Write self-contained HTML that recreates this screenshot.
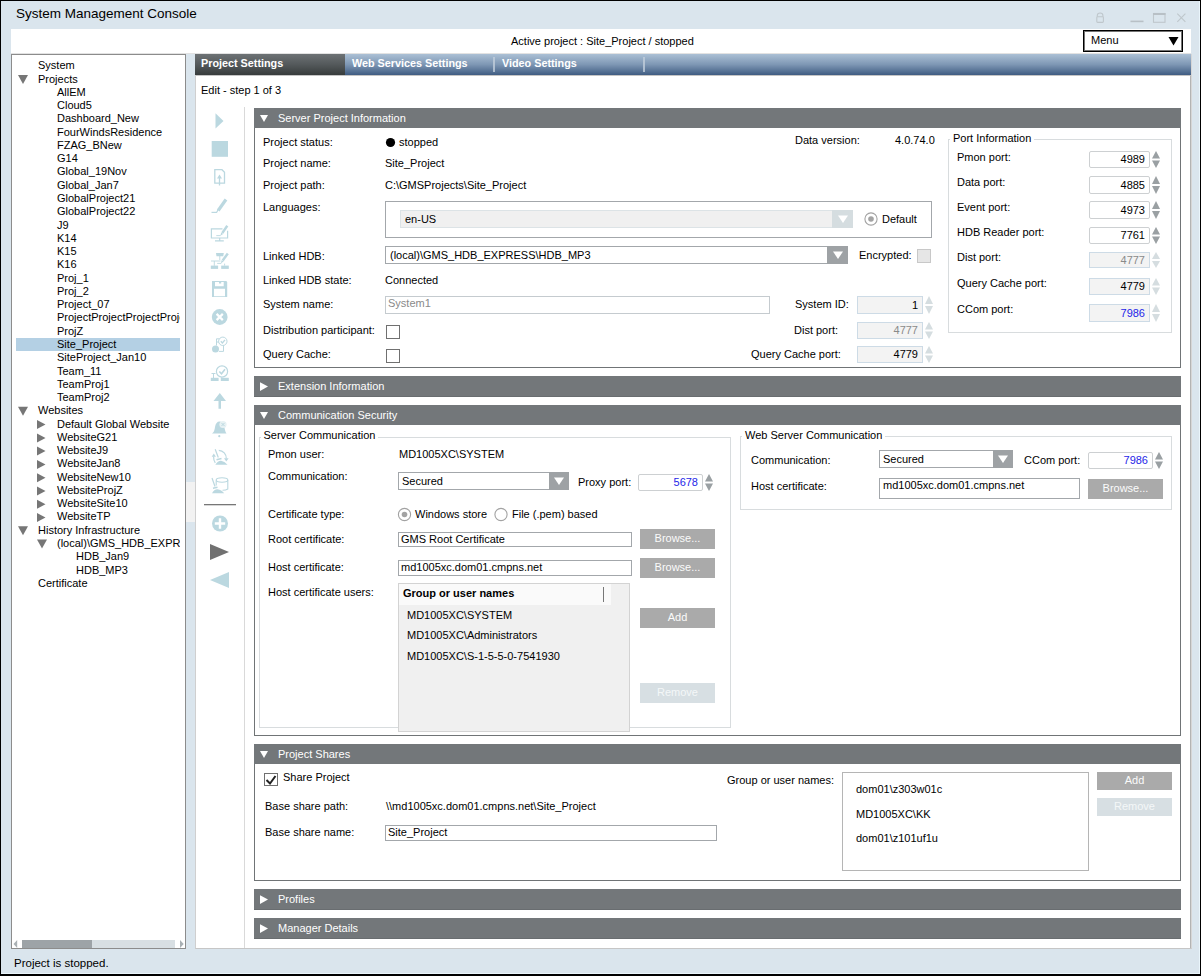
<!DOCTYPE html><html><head><meta charset="utf-8"><style>
*{margin:0;padding:0;box-sizing:border-box}
html,body{width:1201px;height:976px;overflow:hidden}
body{position:relative;background:#dae5ed;font-family:"Liberation Sans",sans-serif;font-size:11px;color:#000}
.t{position:absolute;white-space:nowrap;line-height:13px}
.b{position:absolute}
.g{color:#8a8a8a}
.w{color:#fff}
.bl{color:#1e1ee8}
.bold{font-weight:bold}
svg{position:absolute;overflow:visible}
</style></head><body>
<div class="b" style="left:0px;top:0px;width:1201px;height:976px;border-left:1px solid #000;border-top:1px solid #000;border-right:1px solid #000;border-bottom:2px solid #000"></div>
<div class="b" style="left:1199px;top:1px;width:1px;height:973px;background:#eaf5fb"></div>
<div class="b" style="left:1px;top:973px;width:1199px;height:1px;background:#eaf5fb"></div>
<div class="t" style="left:16px;top:6px;font-size:13.5px;line-height:16px">System Management Console</div>
<svg style="left:0;top:0" width="1201" height="976">
<g fill="none" stroke="#bfc7cc" stroke-width="1.1">
<rect x="1096.8" y="16.8" width="6.6" height="5.6" rx="0.8"/>
<path d="M1097.3 16.8 v-1.3 a2.8 2.5 0 0 1 5.6 0 v1.3"/>
<rect x="1153.5" y="13.5" width="11.5" height="8.8"/>
<path d="M1177.3 13.6 L1185.4 21.9 M1185.4 13.6 L1177.3 21.9"/>
</g>
<rect x="1130.5" y="20.6" width="13" height="1.6" fill="#b8c0c6"/>
<rect x="1153" y="13" width="12.5" height="2" fill="#b8c0c6"/>
</svg>
<div class="b" style="left:11px;top:29px;width:1180px;height:25px;background:#fff;border-bottom:1px solid #e2e2e2"></div>
<div class="t " style="left:511px;top:35.0px;">Active project : Site_Project / stopped</div>
<div class="b" style="left:1083px;top:30px;width:100px;height:22px;border:1px solid #000;box-shadow:inset 0 0 0 1px rgba(0,0,0,.55);background:#fff"></div>
<div class="t " style="left:1091px;top:34.0px;">Menu</div>
<svg style="left:0;top:0" width="1201" height="976"><path d="M1168.5 37 L1178.5 37 L1173.5 45.5Z" fill="#000"/></svg>
<div class="b" style="left:11px;top:54px;width:175px;height:895px;background:#fff;border:1px solid #8c8c8c"></div>
<div class="b" style="left:12px;top:55px;width:168px;height:880px;overflow:hidden">
<div class="t" style="left:26px;top:4.30px">System</div>
<div class="t" style="left:26px;top:17.57px">Projects</div>
<div class="t" style="left:45px;top:30.84px">AllEM</div>
<div class="t" style="left:45px;top:44.11px">Cloud5</div>
<div class="t" style="left:45px;top:57.38px">Dashboard_New</div>
<div class="t" style="left:45px;top:70.65px">FourWindsResidence</div>
<div class="t" style="left:45px;top:83.92px">FZAG_BNew</div>
<div class="t" style="left:45px;top:97.19px">G14</div>
<div class="t" style="left:45px;top:110.46px">Global_19Nov</div>
<div class="t" style="left:45px;top:123.73px">Global_Jan7</div>
<div class="t" style="left:45px;top:137.00px">GlobalProject21</div>
<div class="t" style="left:45px;top:150.27px">GlobalProject22</div>
<div class="t" style="left:45px;top:163.54px">J9</div>
<div class="t" style="left:45px;top:176.81px">K14</div>
<div class="t" style="left:45px;top:190.08px">K15</div>
<div class="t" style="left:45px;top:203.35px">K16</div>
<div class="t" style="left:45px;top:216.62px">Proj_1</div>
<div class="t" style="left:45px;top:229.89px">Proj_2</div>
<div class="t" style="left:45px;top:243.16px">Project_07</div>
<div class="t" style="left:45px;top:256.43px">ProjectProjectProjectProject</div>
<div class="t" style="left:45px;top:269.70px">ProjZ</div>
<div class="b" style="left:4px;top:282.97px;width:165px;height:13px;background:#b4d0e4"></div>
<div class="t" style="left:45px;top:282.97px">Site_Project</div>
<div class="t" style="left:45px;top:296.24px">SiteProject_Jan10</div>
<div class="t" style="left:45px;top:309.51px">Team_11</div>
<div class="t" style="left:45px;top:322.78px">TeamProj1</div>
<div class="t" style="left:45px;top:336.05px">TeamProj2</div>
<div class="t" style="left:26px;top:349.32px">Websites</div>
<div class="t" style="left:45px;top:362.59px">Default Global Website</div>
<div class="t" style="left:45px;top:375.86px">WebsiteG21</div>
<div class="t" style="left:45px;top:389.13px">WebsiteJ9</div>
<div class="t" style="left:45px;top:402.40px">WebsiteJan8</div>
<div class="t" style="left:45px;top:415.67px">WebsiteNew10</div>
<div class="t" style="left:45px;top:428.94px">WebsiteProjZ</div>
<div class="t" style="left:45px;top:442.21px">WebsiteSite10</div>
<div class="t" style="left:45px;top:455.48px">WebsiteTP</div>
<div class="t" style="left:26px;top:468.75px">History Infrastructure</div>
<div class="t" style="left:45px;top:482.02px">(local)\GMS_HDB_EXPRESS</div>
<div class="t" style="left:64px;top:495.29px">HDB_Jan9</div>
<div class="t" style="left:64px;top:508.56px">HDB_MP3</div>
<div class="t" style="left:26px;top:521.83px">Certificate</div>
</div>
<svg style="left:0;top:0" width="1201" height="976"><g fill="#767676"><path d="M18 75.1 L28 75.1 L23 84.1Z"/><path d="M18 406.8 L28 406.8 L23 415.8Z"/><path d="M37 420.1 L45.5 424.6 L37 429.1Z"/><path d="M37 433.4 L45.5 437.9 L37 442.4Z"/><path d="M37 446.6 L45.5 451.1 L37 455.6Z"/><path d="M37 459.9 L45.5 464.4 L37 468.9Z"/><path d="M37 473.2 L45.5 477.7 L37 482.2Z"/><path d="M37 486.4 L45.5 490.9 L37 495.4Z"/><path d="M37 499.7 L45.5 504.2 L37 508.7Z"/><path d="M37 513.0 L45.5 517.5 L37 522.0Z"/><path d="M18 526.2 L28 526.2 L23 535.2Z"/><path d="M37 539.5 L47 539.5 L42 548.5Z"/></g></svg>
<div class="b" style="left:22px;top:940px;width:70px;height:8px;background:#9da3a7"></div>
<div class="b" style="left:92px;top:940px;width:83px;height:8px;background:#d8dfe3"></div>
<svg style="left:0;top:0" width="1201" height="976"><g fill="#a9b0b4"><path d="M13.5 944 L17.2 940 L17.2 948Z"/><path d="M183.7 944 L180 940 L180 948Z"/></g></svg>
<div class="t " style="left:14px;top:956.5px;font-size:11.5px">Project is stopped.</div>
<div class="b" style="left:186px;top:482px;width:9px;height:40px;background:#f2f2f2"></div>
<div class="b" style="left:195px;top:54px;width:997px;height:895px;background:#fff;border-left:1px solid #cfcfcf;border-right:1px solid #d6d6d6;border-bottom:1px solid #c6c6c6"></div>
<div class="b" style="left:1190px;top:54px;width:1px;height:894px;background:#b3b3b3"></div>
<div class="b" style="left:195px;top:54px;width:996px;height:21px;background:linear-gradient(#abc0d5,#7e97b4 50%,#3f5c82)"></div>
<div class="b" style="left:195px;top:54px;width:150px;height:21px;background:linear-gradient(#6d7275,#54595b 50%,#373c3c)"></div>
<div class="b" style="left:196px;top:75px;width:995px;height:1px;background:#c4c4c4"></div>
<div class="t bold w" style="left:201px;top:57px;font-size:10.8px">Project Settings</div>
<div class="t bold w" style="left:352px;top:57px;font-size:10.8px">Web Services Settings</div>
<div class="t bold w" style="left:502px;top:57px;font-size:10.8px">Video Settings</div>
<div class="b" style="left:493px;top:57px;width:2px;height:15px;background:#c0cddb;opacity:.8"></div>
<div class="b" style="left:643px;top:57px;width:2px;height:15px;background:#c0cddb;opacity:.8"></div>
<div class="t " style="left:201px;top:83.5px;">Edit - step 1 of 3</div>
<div class="b" style="left:244px;top:107px;width:1px;height:841px;background:#d9d9d9"></div>
<div class="b" style="left:254px;top:108px;width:927px;height:20px;background:#73777a"></div>
<svg style="left:0;top:0" width="1201" height="976"><path d="M260 115 L268 115 L264 122Z" fill="#fff"/></svg>
<div class="t w" style="left:278px;top:111.5px;">Server Project Information</div>
<div class="b" style="left:254px;top:128px;width:927px;height:240px;border:1px solid #707476;border-top:none"></div>
<div class="t " style="left:263px;top:135.5px;">Project status:</div>
<svg style="left:0;top:0" width="1201" height="976"><circle cx="390.5" cy="142.5" r="4.6" fill="#000"/></svg>
<div class="t " style="left:399px;top:135.5px;">stopped</div>
<div class="t " style="left:263px;top:157.0px;">Project name:</div>
<div class="t " style="left:385px;top:157.0px;">Site_Project</div>
<div class="t " style="left:263px;top:178.5px;">Project path:</div>
<div class="t " style="left:385px;top:178.5px;">C:\GMSProjects\Site_Project</div>
<div class="t " style="left:263px;top:201.0px;">Languages:</div>
<div class="b" style="left:385px;top:201px;width:547px;height:37px;border:1px solid #a3a7ab"></div>
<div class="b" style="left:400px;top:210px;width:453px;height:18px;border:1px solid #dce3e6;background:#f0f0f0"></div>
<div class="b" style="left:832px;top:210px;width:21px;height:18px;background:#d5dde0"></div>
<svg style="left:0;top:0" width="1201" height="976"><path d="M838 215.5 L848 215.5 L843 223.0Z" fill="#fff"/></svg>
<div class="t " style="left:405px;top:212.5px;">en-US</div>
<svg style="left:0;top:0" width="1201" height="976"><circle cx="871" cy="219" r="6.1" fill="#fff" stroke="#a2a2a2" stroke-width="1.1"/><circle cx="871" cy="219" r="2.8" fill="#a3a3a3"/></svg>
<div class="t " style="left:882px;top:212.5px;">Default</div>
<div class="t " style="left:263px;top:249.5px;">Linked HDB:</div>
<div class="b" style="left:385px;top:246px;width:463px;height:18px;border:1px solid #a3a7ab;background:#fff"></div>
<div class="b" style="left:827px;top:246px;width:21px;height:18px;background:#9ea2a5"></div>
<svg style="left:0;top:0" width="1201" height="976"><path d="M833 251.5 L843 251.5 L838 259.0Z" fill="#fff"/></svg>
<div class="t " style="left:390px;top:248.5px;">(local)\GMS_HDB_EXPRESS\HDB_MP3</div>
<div class="t " style="left:859px;top:248.5px;">Encrypted:</div>
<div class="b" style="left:917px;top:249px;width:14px;height:14px;border:1.2px solid #c8c8c8;background:#e6e6e6"></div>
<div class="t " style="left:263px;top:273.5px;">Linked HDB state:</div>
<div class="t " style="left:385px;top:273.5px;">Connected</div>
<div class="t " style="left:263px;top:297.5px;">System name:</div>
<div class="b" style="left:385px;top:296px;width:385px;height:18px;border:1px solid #c5cbcf;background:#fff"></div>
<div class="t g" style="left:388px;top:297.0px;">System1</div>
<div class="t " style="left:795px;top:133.5px;">Data version:</div>
<div class="t " style="left:895px;top:133.5px;">4.0.74.0</div>
<div class="t " style="left:795px;top:297.5px;">System ID:</div>
<div class="b" style="left:857px;top:296px;width:66px;height:18px;border:1.5px solid #cddbe6;background:#f3f3f3"></div>
<div class="t " style="right:283px;top:298.5px;">1</div>
<svg style="left:0;top:0" width="1201" height="976"><g fill="#d5dde0"><path d="M925 304.0 L933 304.0 L929 296Z"/><path d="M925 306.0 L933 306.0 L929 314Z"/></g></svg>
<div class="t " style="left:794px;top:324.0px;">Dist port:</div>
<div class="b" style="left:857px;top:322px;width:66px;height:17px;border:1.5px solid #cddbe6;background:#f3f3f3"></div>
<div class="t g" style="right:283px;top:324.0px;">4777</div>
<svg style="left:0;top:0" width="1201" height="976"><g fill="#d5dde0"><path d="M925 329.5 L933 329.5 L929 322Z"/><path d="M925 331.5 L933 331.5 L929 339Z"/></g></svg>
<div class="t " style="left:751px;top:348.0px;">Query Cache port:</div>
<div class="b" style="left:857px;top:346px;width:66px;height:17px;border:1.5px solid #cddbe6;background:#f3f3f3"></div>
<div class="t " style="right:283px;top:348.0px;">4779</div>
<svg style="left:0;top:0" width="1201" height="976"><g fill="#d5dde0"><path d="M925 353.5 L933 353.5 L929 346Z"/><path d="M925 355.5 L933 355.5 L929 363Z"/></g></svg>
<div class="t " style="left:263px;top:323.5px;">Distribution participant:</div>
<div class="b" style="left:386px;top:325px;width:14px;height:14px;border:1.2px solid #707070;background:#fff"></div>
<div class="t " style="left:263px;top:347.5px;">Query Cache:</div>
<div class="b" style="left:386px;top:349px;width:14px;height:14px;border:1.2px solid #707070;background:#fff"></div>
<div class="b" style="left:948px;top:139px;width:224px;height:194px;border:1px solid #d8dcde"></div>
<div class="t" style="left:950px;top:131.5px;background:#fff;padding:0 3px 0 3px">Port Information</div>
<div class="t " style="left:957px;top:150.8px;">Pmon port:</div>
<div class="b" style="left:1089px;top:151px;width:61px;height:17px;border:1px solid #cdd0d2;border-radius:2px;background:#fff"></div>
<div class="t " style="right:56px;top:153.0px;">4989</div>
<svg style="left:0;top:0" width="1201" height="976"><g fill="#9aa0a3"><path d="M1152 158.5 L1160 158.5 L1156 151Z"/><path d="M1152 160.5 L1160 160.5 L1156 168Z"/></g></svg>
<div class="t " style="left:957px;top:176.1px;">Data port:</div>
<div class="b" style="left:1089px;top:176px;width:61px;height:18px;border:1px solid #cdd0d2;border-radius:2px;background:#fff"></div>
<div class="t " style="right:56px;top:178.5px;">4885</div>
<svg style="left:0;top:0" width="1201" height="976"><g fill="#9aa0a3"><path d="M1152 184.0 L1160 184.0 L1156 176Z"/><path d="M1152 186.0 L1160 186.0 L1156 194Z"/></g></svg>
<div class="t " style="left:957px;top:200.9px;">Event port:</div>
<div class="b" style="left:1089px;top:201px;width:61px;height:18px;border:1px solid #cdd0d2;border-radius:2px;background:#fff"></div>
<div class="t " style="right:56px;top:203.5px;">4973</div>
<svg style="left:0;top:0" width="1201" height="976"><g fill="#9aa0a3"><path d="M1152 209.0 L1160 209.0 L1156 201Z"/><path d="M1152 211.0 L1160 211.0 L1156 219Z"/></g></svg>
<div class="t " style="left:957px;top:225.8px;">HDB Reader port:</div>
<div class="b" style="left:1089px;top:227px;width:61px;height:17px;border:1px solid #cdd0d2;border-radius:2px;background:#fff"></div>
<div class="t " style="right:56px;top:229.0px;">7761</div>
<svg style="left:0;top:0" width="1201" height="976"><g fill="#9aa0a3"><path d="M1152 234.5 L1160 234.5 L1156 227Z"/><path d="M1152 236.5 L1160 236.5 L1156 244Z"/></g></svg>
<div class="t " style="left:957px;top:250.7px;">Dist port:</div>
<div class="b" style="left:1089px;top:252px;width:61px;height:16px;border:1.5px solid #cddbe6;background:#f3f3f3"></div>
<div class="t g" style="right:56px;top:253.5px;">4777</div>
<svg style="left:0;top:0" width="1201" height="976"><g fill="#d5dde0"><path d="M1152 259.0 L1160 259.0 L1156 252Z"/><path d="M1152 261.0 L1160 261.0 L1156 268Z"/></g></svg>
<div class="t " style="left:957px;top:276.5px;">Query Cache port:</div>
<div class="b" style="left:1089px;top:278px;width:61px;height:17px;border:1.5px solid #cddbe6;background:#f3f3f3"></div>
<div class="t " style="right:56px;top:280.0px;">4779</div>
<svg style="left:0;top:0" width="1201" height="976"><g fill="#d5dde0"><path d="M1152 285.5 L1160 285.5 L1156 278Z"/><path d="M1152 287.5 L1160 287.5 L1156 295Z"/></g></svg>
<div class="t " style="left:957px;top:302.7px;">CCom port:</div>
<div class="b" style="left:1089px;top:304px;width:61px;height:18px;border:1.5px solid #cddbe6;background:#f3f3f3"></div>
<div class="t bl" style="right:56px;top:306.5px;">7986</div>
<svg style="left:0;top:0" width="1201" height="976"><g fill="#d5dde0"><path d="M1152 312.0 L1160 312.0 L1156 304Z"/><path d="M1152 314.0 L1160 314.0 L1156 322Z"/></g></svg>
<div class="b" style="left:254px;top:376px;width:927px;height:20px;background:#73777a"></div>
<div class="b" style="left:254px;top:396px;width:927px;height:1px;background:#696d70"></div>
<svg style="left:0;top:0" width="1201" height="976"><path d="M260 382.3 L268 386.6 L260 391Z" fill="#fff"/></svg>
<div class="t w" style="left:278px;top:379.5px;">Extension Information</div>
<div class="b" style="left:254px;top:405px;width:927px;height:20px;background:#73777a"></div>
<svg style="left:0;top:0" width="1201" height="976"><path d="M260 412 L268 412 L264 419Z" fill="#fff"/></svg>
<div class="t w" style="left:278px;top:408.5px;">Communication Security</div>
<div class="b" style="left:254px;top:425px;width:927px;height:311px;border:1px solid #707476;border-top:none"></div>
<div class="b" style="left:259px;top:437px;width:472px;height:291px;border:1px solid #d8dcde"></div>
<div class="t" style="left:260.5px;top:428.8px;background:#fff;padding:0 3px 0 3px">Server Communication</div>
<div class="t " style="left:268px;top:448.2px;">Pmon user:</div>
<div class="t " style="left:399px;top:448.2px;">MD1005XC\SYSTEM</div>
<div class="t " style="left:268px;top:469.8px;">Communication:</div>
<div class="b" style="left:398px;top:472px;width:171px;height:18px;border:1px solid #a3a7ab;background:#fff"></div>
<div class="b" style="left:549px;top:472px;width:20px;height:18px;background:#9ea2a5"></div>
<svg style="left:0;top:0" width="1201" height="976"><path d="M554 477.5 L564 477.5 L559 485.0Z" fill="#fff"/></svg>
<div class="t " style="left:402px;top:474.5px;">Secured</div>
<div class="t " style="left:578px;top:475.9px;">Proxy port:</div>
<div class="b" style="left:638px;top:474px;width:65px;height:17px;border:1px solid #cdd0d2;border-radius:2px;background:#fff"></div>
<div class="t bl" style="right:503px;top:476.0px;">5678</div>
<svg style="left:0;top:0" width="1201" height="976"><g fill="#9aa0a3"><path d="M705 481.5 L713 481.5 L709 474Z"/><path d="M705 483.5 L713 483.5 L709 491Z"/></g></svg>
<div class="t " style="left:268px;top:508.2px;">Certificate type:</div>
<svg style="left:0;top:0" width="1201" height="976"><circle cx="404.5" cy="514.5" r="6.1" fill="#fff" stroke="#a2a2a2" stroke-width="1.1"/><circle cx="404.5" cy="514.5" r="2.8" fill="#a3a3a3"/></svg>
<div class="t " style="left:415px;top:508.2px;">Windows store</div>
<svg style="left:0;top:0" width="1201" height="976"><circle cx="501" cy="514.5" r="6.1" fill="#fff" stroke="#a2a2a2" stroke-width="1.1"/></svg>
<div class="t " style="left:512px;top:508.2px;">File (.pem) based</div>
<div class="t " style="left:268px;top:532.5px;">Root certificate:</div>
<div class="b" style="left:398px;top:532px;width:234px;height:15px;border:1px solid #a3a7ab;background:#fff"></div>
<div class="t " style="left:401px;top:532.5px;">GMS Root Certificate</div>
<div class="b" style="left:640px;top:529px;width:75px;height:20px;background:#aaaaaa;color:#fbfbfb;text-align:center;line-height:18px;font-size:11px">Browse...</div>
<div class="t " style="left:268px;top:560.5px;">Host certificate:</div>
<div class="b" style="left:398px;top:560px;width:234px;height:16px;border:1px solid #a3a7ab;background:#fff"></div>
<div class="t " style="left:401px;top:561.0px;">md1005xc.dom01.cmpns.net</div>
<div class="b" style="left:640px;top:558px;width:75px;height:20px;background:#aaaaaa;color:#fbfbfb;text-align:center;line-height:18px;font-size:11px">Browse...</div>
<div class="t " style="left:268px;top:585.7px;">Host certificate users:</div>
<div class="b" style="left:398px;top:583px;width:232px;height:149px;border:1px solid #d3d3d3;background:#f0f0f0"></div>
<div class="b" style="left:399px;top:584px;width:212px;height:21px;background:#fafafa"></div>
<div class="b" style="left:603px;top:587px;width:1px;height:15px;background:#777"></div>
<div class="t bold" style="left:403px;top:586.5px;">Group or user names</div>
<div class="t " style="left:407px;top:608.5px;">MD1005XC\SYSTEM</div>
<div class="t " style="left:407px;top:628.5px;">MD1005XC\Administrators</div>
<div class="t " style="left:407px;top:649.5px;">MD1005XC\S-1-5-5-0-7541930</div>
<div class="b" style="left:640px;top:608px;width:75px;height:20px;background:#aaaaaa;color:#fbfbfb;text-align:center;line-height:18px;font-size:11px">Add</div>
<div class="b" style="left:640px;top:683px;width:75px;height:20px;background:#d7dfe3;color:#f4f7f8;text-align:center;line-height:18px;font-size:11px">Remove</div>
<div class="b" style="left:740px;top:436px;width:432px;height:74px;border:1px solid #d8dcde"></div>
<div class="t" style="left:742px;top:428.5px;background:#fff;padding:0 3px 0 3px">Web Server Communication</div>
<div class="t " style="left:751px;top:453.5px;">Communication:</div>
<div class="b" style="left:879px;top:450px;width:134px;height:18px;border:1px solid #a3a7ab;background:#fff"></div>
<div class="b" style="left:993px;top:450px;width:20px;height:18px;background:#9ea2a5"></div>
<svg style="left:0;top:0" width="1201" height="976"><path d="M998 455.5 L1008 455.5 L1003 463.0Z" fill="#fff"/></svg>
<div class="t " style="left:883px;top:452.5px;">Secured</div>
<div class="t " style="left:1024px;top:453.5px;">CCom port:</div>
<div class="b" style="left:1088px;top:452px;width:65px;height:17px;border:1px solid #cdd0d2;border-radius:2px;background:#fff"></div>
<div class="t bl" style="right:53px;top:454.0px;">7986</div>
<svg style="left:0;top:0" width="1201" height="976"><g fill="#9aa0a3"><path d="M1155 459.5 L1163 459.5 L1159 452Z"/><path d="M1155 461.5 L1163 461.5 L1159 469Z"/></g></svg>
<div class="t " style="left:751px;top:479.8px;">Host certificate:</div>
<div class="b" style="left:879px;top:478px;width:201px;height:21px;border:1px solid #a3a7ab;background:#fff"></div>
<div class="t " style="left:883px;top:478.5px;">md1005xc.dom01.cmpns.net</div>
<div class="b" style="left:1088px;top:479px;width:75px;height:20px;background:#aaaaaa;color:#fbfbfb;text-align:center;line-height:18px;font-size:11px">Browse...</div>
<div class="b" style="left:254px;top:744px;width:927px;height:20px;background:#73777a"></div>
<svg style="left:0;top:0" width="1201" height="976"><path d="M260 751 L268 751 L264 758Z" fill="#fff"/></svg>
<div class="t w" style="left:278px;top:747.5px;">Project Shares</div>
<div class="b" style="left:254px;top:764px;width:927px;height:117px;border:1px solid #707476;border-top:none"></div>
<div class="b" style="left:264px;top:773px;width:14px;height:13px;border:1.2px solid #707070;background:#fff"></div>
<svg style="left:0;top:0" width="1201" height="976"><path d="M266.5 780 L270 783.5 L275.5 776" fill="none" stroke="#222" stroke-width="2"/></svg>
<div class="t " style="left:283px;top:770.5px;">Share Project</div>
<div class="t " style="left:265px;top:799.5px;">Base share path:</div>
<div class="t " style="left:386px;top:799.5px;">\\md1005xc.dom01.cmpns.net\Site_Project</div>
<div class="t " style="left:265px;top:826.3px;">Base share name:</div>
<div class="b" style="left:385px;top:825px;width:332px;height:16px;border:1px solid #a3a7ab;background:#fff"></div>
<div class="t " style="left:388px;top:826.0px;">Site_Project</div>
<div class="t " style="left:727px;top:773.5px;">Group or user names:</div>
<div class="b" style="left:842px;top:772px;width:247px;height:99px;border:1px solid #b5b5b5;background:#fff"></div>
<div class="t " style="left:856px;top:782.8px;">dom01\z303w01c</div>
<div class="t " style="left:856px;top:807.6px;">MD1005XC\KK</div>
<div class="t " style="left:856px;top:832.4px;">dom01\z101uf1u</div>
<div class="b" style="left:1097px;top:772px;width:75px;height:18px;background:#aaaaaa;color:#fbfbfb;text-align:center;line-height:17px;font-size:11px">Add</div>
<div class="b" style="left:1097px;top:798px;width:75px;height:18px;background:#d7dfe3;color:#f4f7f8;text-align:center;line-height:17px;font-size:11px">Remove</div>
<div class="b" style="left:254px;top:889px;width:927px;height:20px;background:#73777a"></div>
<div class="b" style="left:254px;top:909px;width:927px;height:1px;background:#696d70"></div>
<svg style="left:0;top:0" width="1201" height="976"><path d="M260 895.3 L268 899.6 L260 904Z" fill="#fff"/></svg>
<div class="t w" style="left:278px;top:892.5px;">Profiles</div>
<div class="b" style="left:254px;top:918px;width:927px;height:20px;background:#73777a"></div>
<div class="b" style="left:254px;top:938px;width:927px;height:1px;background:#696d70"></div>
<svg style="left:0;top:0" width="1201" height="976"><path d="M260 924.3 L268 928.6 L260 933Z" fill="#fff"/></svg>
<div class="t w" style="left:278px;top:921.5px;">Manager Details</div>
<svg style="left:0;top:0" width="1201" height="976">
<g fill="#bbd8e0" stroke="none">
<path d="M215.5 113.3 L223.5 121 L215.5 128.6Z"/>
<rect x="211.7" y="141" width="16.3" height="15.8"/>
</g>
<g fill="none" stroke="#bbd8e0" stroke-width="1.3">
<path d="M214.8 169.7 H222 L224.5 172.3 V183.2 H214.8Z"/>
<path d="M219.5 185.5 V178"/>
</g>
<path d="M217 178.5 L219.5 174.5 L222 178.5Z" fill="#bbd8e0"/>
<g fill="none" stroke="#bbd8e0">
<path d="M211.5 212.4 H217" stroke-width="1.2"/>
<path d="M218.2 210.5 L226 199.5" stroke-width="3.2"/>
<path d="M216.8 212.3 L218 209.8" stroke-width="1.2"/>
</g>
<g fill="none" stroke="#bbd8e0" stroke-width="1.2">
<path d="M222.5 228.8 H211.4 V238 H227.6 V230.8"/>
<path d="M219.7 238 V240.3 M215 240.9 H223.8"/>
<path d="M216.3 235.6 H220.6" stroke-width="0.9"/>
<path d="M211 261 H220.5 M214.3 261 V265.8 M224.6 263.6 V265.6 M219.8 256 V260" stroke-width="0.9"/>
<path d="M217.2 263.4 H221.3" stroke-width="0.9"/>
</g>
<g fill="#bbd8e0">
<path d="M221.3 232.3 L226.3 225 L228.3 226.4 L223.3 233.7Z"/>
<path d="M220.4 235.8 L221.2 232.6 L223.2 234Z"/>
<path d="M216 253 H223.8 L223.2 256.2 H216.5Z"/>
<rect x="210.8" y="265.6" width="7.3" height="3.3"/>
<rect x="221.2" y="265.6" width="7.6" height="3.3"/>
<path d="M221.7 259.8 L226.8 252.8 L228.8 254.2 L223.7 261.2Z"/>
<path d="M220.9 263.3 L221.7 260.1 L223.7 261.5Z"/>
</g>
<path d="M212 281 H226.3 L227.2 282 V296.9 H212Z M215 282 H219 V283.6 H221.2 V282 H223.7 V286.3 H215Z M214 288.8 H225 V296.2 H214Z" fill="#bbd8e0" fill-rule="evenodd"/>
<circle cx="219.7" cy="317" r="7.9" fill="#bbd8e0"/>
<path d="M216.6 313.9 L222.8 320.1 M222.8 313.9 L216.6 320.1" stroke="#fff" stroke-width="2.2"/>
<g fill="none" stroke="#bbd8e0" stroke-width="1">
<path d="M216.5 345.5 V338.8 H219.5 M216.5 342 H219 M219 351.4 H223.5 V345.5"/>
<circle cx="222.8" cy="341.3" r="4.2"/>
<path d="M220.8 341.3 L222.4 343 L225 339.8" stroke-width="1.3"/>
<path d="M211.5 373.5 H215.5 M213.5 373.5 V378"/>
<circle cx="222" cy="371.5" r="5.6" stroke-width="1.2"/>
<path d="M219.3 371.5 L221.5 373.8 L225 369.3" stroke-width="1.6"/>
<path d="M221.5 377.5 V378.5"/>
</g>
<g fill="#bbd8e0">
<circle cx="215.5" cy="349" r="3.5"/>
<rect x="210.8" y="377.8" width="7.8" height="3.2"/>
<rect x="220.8" y="377.8" width="8" height="3.2"/>
<path d="M213.5 401 L219.8 393 L226 401 H221 V408.7 H218.5 V401Z"/>
<path d="M212 433.5 Q214.5 432 215 427 Q216 421.5 219.5 421.5 Q223 421.5 223.8 425 L225 430 Q225.5 432.5 226.5 433.5Z"/>
<circle cx="219.3" cy="436.2" r="1.1"/>
<circle cx="223" cy="424.5" r="3.6" fill="#e8f2f4"/>
</g>
<path d="M221.4 422.9 L224.6 426.1 M224.6 422.9 L221.4 426.1" stroke="#bbd8e0" stroke-width="1"/>
<g fill="none" stroke="#bbd8e0" stroke-width="1.2">
<path d="M215.2 449.3 L218.3 457.5"/>
<path d="M216.5 459.8 L221.5 458.6" stroke-width="1.5"/>
<path d="M218.8 450.3 A7.8 7.8 0 0 1 226.3 458.5"/>
<path d="M213.6 456.5 Q213.4 460.2 215.3 462.8"/>
<ellipse cx="222" cy="480" rx="5.8" ry="2.2" stroke-width="1.1"/>
<path d="M227.8 480 V489 Q226 490.3 222.5 490.3 M216.2 480.5 V485.5" stroke-width="1.1"/>
<path d="M212 478 L215 486.5"/>
<path d="M213 488.2 L217.5 487.2" stroke-width="1.4"/>
</g>
<g fill="#bbd8e0">
<path d="M215.3 464.8 Q218 460.6 221 460.8 Q224.5 461.5 227.6 464.8Z"/>
<path d="M224 458.3 L228.6 458.3 L226.3 461.6Z"/>
<path d="M211.7 456.8 L215.9 456.8 L213.8 453.4Z"/>
<path d="M212 493.3 Q214 489.2 217.5 489.2 Q221.5 489.6 224.2 493.3Z"/>
</g>
<rect x="204" y="504" width="32" height="1.3" fill="#777"/>
<circle cx="220" cy="523.5" r="8" fill="#bbd8e0"/>
<path d="M220 518.3 V528.7 M214.8 523.5 H225.2" stroke="#fff" stroke-width="2.4"/>
<path d="M210 544 L229 552 L210 560Z" fill="#717171"/>
<path d="M229 572 L210 580 L229 588Z" fill="#bbd8e0"/>
</svg>
</body></html>
